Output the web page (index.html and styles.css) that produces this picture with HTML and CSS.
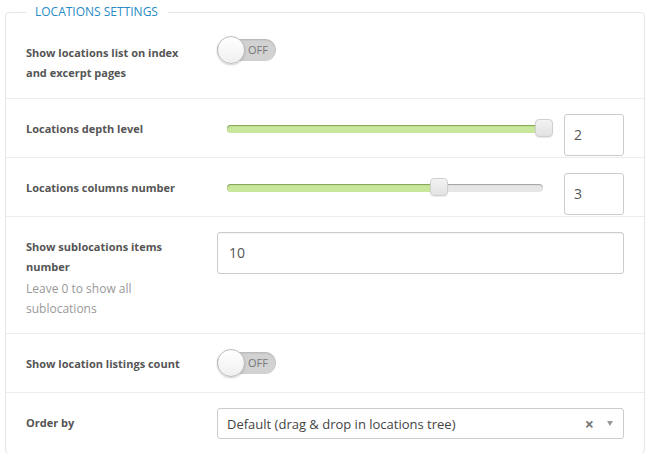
FILE: index.html
```html
<!DOCTYPE html>
<html>
<head>
<meta charset="utf-8">
<link rel="stylesheet" href="styles.css">
</head>
<body>
<fieldset class="panel">
  <legend class="panel-title">Locations Settings</legend>

  <div class="row row-first">
    <div class="label">Show locations list on index and excerpt pages</div>
    <div class="control">
      <div class="toggle"><span class="toggle-knob"></span><span class="toggle-text">OFF</span></div>
    </div>
  </div>

  <div class="row">
    <div class="label">Locations depth level</div>
    <div class="control slider-control">
      <div class="slider">
        <div class="track"><div class="fill" style="width:100%"></div><span class="handle" style="left:100%"></span></div>
      </div>
      <div class="num-input">2</div>
    </div>
  </div>

  <div class="row">
    <div class="label">Locations columns number</div>
    <div class="control slider-control">
      <div class="slider">
        <div class="track"><div class="fill" style="width:66.8%"></div><span class="handle" style="left:66.8%"></span></div>
      </div>
      <div class="num-input">3</div>
    </div>
  </div>

  <div class="row">
    <div class="label">Show sublocations items number
      <div class="hint">Leave 0 to show all sublocations</div>
    </div>
    <div class="control">
      <div class="text-input">10</div>
    </div>
  </div>

  <div class="row">
    <div class="label">Show location listings count</div>
    <div class="control">
      <div class="toggle"><span class="toggle-knob"></span><span class="toggle-text">OFF</span></div>
    </div>
  </div>

  <div class="row">
    <div class="label">Order by</div>
    <div class="control">
      <div class="select">
        <span class="select-value">Default (drag &amp; drop in locations tree)</span>
        <span class="select-clear">×</span>
        <span class="select-arrow"></span>
      </div>
    </div>
  </div>
</fieldset>
</body>
</html>
```

FILE: styles.css
```css
html, body {
  margin: 0;
  padding: 0;
  background: #fff;
  font-family: "Open Sans", "Noto Sans", sans-serif;
  overflow: hidden;
}

.panel {
  margin: 4px 2px 0 5px;
  padding: 0;
  min-width: 0;
  border: 1px solid #e6e6e6;
  border-radius: 4px;
}

.panel-title {
  margin-left: 20px;
  padding: 0 10px 0 9px;
  font-size: 12px;
  line-height: 16px;
  color: #2a8bc4;
  text-transform: uppercase;
}

.row {
  display: grid;
  grid-template-columns: 191px 1fr;
  padding: 15px 20px 14px 20px;
  border-top: 1px solid #ececec;
}

.row-first {
  border-top: none;
  padding-top: 16px;
}

.label {
  padding: 5px 22px 4px 0;
  font-size: 11px;
  font-weight: 700;
  line-height: 20px;
  color: #555;
}

.row-first .label {
  padding-top: 7px;
  padding-bottom: 1px;
}

.hint {
  margin-top: 2px;
  margin-bottom: -4px;
  font-size: 12px;
  font-weight: 400;
  line-height: 20px;
  color: #999;
}

.control {
  min-width: 0;
}

/* toggle */
.toggle {
  position: relative;
  width: 59px;
  height: 28px;
}

.toggle::before {
  content: "";
  position: absolute;
  left: 0;
  right: 0;
  top: 3px;
  height: 22px;
  border-radius: 11px;
  background: #d2d2d2;
  box-shadow: inset 0 1px 2px rgba(0, 0, 0, 0.15);
}

.toggle-knob {
  position: absolute;
  left: 0;
  top: 0;
  width: 26px;
  height: 26px;
  border-radius: 50%;
  border: 1px solid #bdbdbd;
  background: linear-gradient(#ffffff, #f0f0f0);
  box-shadow: 0 1px 2px rgba(0, 0, 0, 0.2);
  z-index: 2;
}

.toggle-text {
  position: absolute;
  left: 31px;
  top: 7px;
  font-size: 11px;
  line-height: 14px;
  color: #777;
  z-index: 1;
}

/* slider */
.slider-control {
  display: flex;
  align-items: flex-start;
  gap: 21px;
  height: 29px;
}

.slider {
  flex: 1;
  height: 29px;
  display: flex;
  align-items: center;
  padding-left: 10px;
}

.track {
  position: relative;
  flex: 1;
  height: 8px;
  border-radius: 4px;
  background: #e6e6e6;
  box-shadow: inset 0 1px 1px rgba(0, 0, 0, 0.3);
}

.fill {
  height: 8px;
  border-radius: 4px;
  background: #c8e69c;
  box-shadow: inset 0 1px 1px rgba(70, 110, 20, 0.55);
}

.handle {
  position: absolute;
  top: -6px;
  width: 16px;
  height: 16px;
  margin-left: -8px;
  border: 1px solid #cfcfcf;
  border-radius: 4px;
  background: linear-gradient(#f3f3f3, #e2e2e2);
  box-shadow: 0 1px 1px rgba(0, 0, 0, 0.08);
}

.num-input {
  flex: none;
  box-sizing: border-box;
  width: 60px;
  height: 42px;
  padding: 0 9px;
  border: 1px solid #cccccc;
  border-radius: 3px;
  font-size: 14px;
  line-height: 40px;
  color: #555;
  background: #fff;
}

/* text input */
.text-input {
  box-sizing: border-box;
  height: 42px;
  padding: 0 11px;
  border: 1px solid #cccccc;
  border-radius: 3px;
  font-size: 14px;
  line-height: 40px;
  color: #555;
  box-shadow: inset 0 1px 1px rgba(0, 0, 0, 0.04);
}

/* select */
.select {
  box-sizing: border-box;
  height: 31px;
  display: flex;
  align-items: center;
  padding: 0 10px 0 9px;
  border: 1px solid #cccccc;
  border-radius: 3px;
  font-size: 13px;
  color: #444;
}

.select-value {
  flex: 1;
  white-space: nowrap;
  overflow: hidden;
}

.select-clear {
  font-size: 16px;
  font-weight: 700;
  color: #777;
  margin-right: 13px;
  line-height: 1;
}

.select-arrow {
  width: 0;
  height: 0;
  border-left: 3px solid transparent;
  border-right: 3px solid transparent;
  border-top: 5px solid #999;
}
```
